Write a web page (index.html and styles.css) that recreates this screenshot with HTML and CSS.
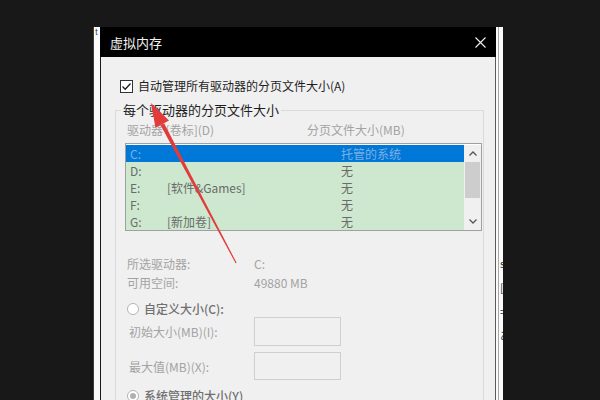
FILE: index.html
```html
<!DOCTYPE html>
<html lang="zh-CN">
  <head>
    <meta charset="UTF-8" />
    <meta name="viewport" content="width=device-width, initial-scale=1.0" />
    <title>虚拟内存</title>
    <link rel="stylesheet" href="styles.css">
  </head>
  <body>
    <!-- window behind the dialog, only its edges show -->
    <div class="back-window">
      <div class="back-edge">t</div>
      <div class="back-side">
        <span>s</span>
        <span>[/</span>
        <span>=</span>
        <span>あ</span>
      </div>
    </div>

    <div class="dialog">
      <div class="titlebar">
        <span class="title">虚拟内存</span>
        <svg class="close" width="11" height="11" viewBox="0 0 11 11">
          <path d="M0.5 0.5 L10.5 10.5 M10.5 0.5 L0.5 10.5" stroke="#f2f2f2" stroke-width="1.1" fill="none" />
        </svg>
      </div>

      <div class="dialog-body">
        <label class="check-row">
          <span class="checkbox">
            <svg width="11" height="11" viewBox="0 0 11 11">
              <path d="M1.5 5.5 L4.2 8.2 L9.5 2.5" stroke="#1e1e1e" stroke-width="1.3" fill="none" />
            </svg>
          </span>
          自动管理所有驱动器的分页文件大小(A)
        </label>

        <fieldset class="group">
          <legend>每个驱动器的分页文件大小</legend>

          <div class="col-heads">
            <span class="col-drive">驱动器 [卷标](D)</span>
            <span>分页文件大小(MB)</span>
          </div>

          <div class="listbox">
            <ul class="rows">
              <li class="selected">
                <span class="c-drive">C:</span><span class="c-label"></span><span>托管的系统</span>
              </li>
              <li>
                <span class="c-drive">D:</span><span class="c-label"></span><span>无</span>
              </li>
              <li>
                <span class="c-drive">E:</span><span class="c-label">[软件&amp;Games]</span><span>无</span>
              </li>
              <li>
                <span class="c-drive">F:</span><span class="c-label"></span><span>无</span>
              </li>
              <li>
                <span class="c-drive">G:</span><span class="c-label">[新加卷]</span><span>无</span>
              </li>
            </ul>
            <div class="scrollbar">
              <div class="sb-btn">
                <svg width="8" height="5" viewBox="0 0 8 5"><path d="M0.5 4.5 L4 1 L7.5 4.5" stroke="#555" stroke-width="1.3" fill="none" /></svg>
              </div>
              <div class="sb-thumb"></div>
              <div class="sb-track"></div>
              <div class="sb-btn">
                <svg width="8" height="5" viewBox="0 0 8 5"><path d="M0.5 0.5 L4 4 L7.5 0.5" stroke="#555" stroke-width="1.3" fill="none" /></svg>
              </div>
            </div>
          </div>

          <div class="info">
            <div class="info-row"><span class="info-key">所选驱动器:</span><span>C:</span></div>
            <div class="info-row"><span class="info-key">可用空间:</span><span>49880 MB</span></div>
          </div>

          <div class="radio-row">
            <span class="radio"></span>
            自定义大小(C):
          </div>
          <div class="field-row">
            <span class="field-label">初始大小(MB)(I):</span>
            <span class="textbox"></span>
          </div>
          <div class="field-row second">
            <span class="field-label">最大值(MB)(X):</span>
            <span class="textbox"></span>
          </div>
          <div class="radio-row last">
            <span class="radio checked"></span>
            系统管理的大小(Y)
          </div>
        </fieldset>
      </div>
    </div>

    <!-- red annotation arrow drawn over the dialog -->
    <svg class="arrow" width="600" height="400" viewBox="0 0 600 400">
      <polygon points="151,103 169,120.5 155.5,127.8" fill="#e23b3b" />
      <polygon points="164.1,123.3 160.5,125.1 235.6,263.2 236.6,262.8" fill="#e23b3b" />
    </svg>
  </body>
</html>
```

FILE: styles.css
```css
* {
  box-sizing: border-box;
}

body {
  margin: 0;
  width: 600px;
  height: 400px;
  overflow: hidden;
  position: relative;
  background: #181818;
  font-family: "Noto Sans CJK SC", "Noto Sans", sans-serif;
  font-size: 12px;
  color: #1e1e1e;
}

/* window underneath */
.back-window {
  position: absolute;
  left: 93px;
  top: 27px;
  width: 410px;
  height: 380px;
  background: #fbfbfb;
  border-left: 1px solid #3a3a3a;
  display: flex;
  justify-content: space-between;
}

.back-edge {
  font-size: 8px;
  line-height: 10px;
  padding: 0 0 0 1px;
  color: #333;
}

.back-side {
  width: 5px;
  border-left: 1px solid #a8a8a8;
  overflow: hidden;
  padding-top: 228px;
  font-size: 11px;
  color: #333;
}

.back-side span {
  display: block;
  height: 24px;
  line-height: 16px;
  white-space: nowrap;
  padding-left: 1px;
}

/* dialog */
.dialog {
  position: absolute;
  left: 100px;
  top: 27px;
  width: 396px;
  height: 380px;
  display: flex;
  flex-direction: column;
}

.titlebar {
  flex: none;
  height: 30px;
  background: #000;
  color: #f2f2f2;
  font-size: 13px;
  display: flex;
  align-items: center;
  justify-content: space-between;
  padding: 0 10px;
}

.dialog-body {
  flex: 1;
  background: #f0f0f0;
  border-left: 1px solid #1a1a1a;
  border-right: 1px solid #5a5a5a;
  padding: 21px 0 0 14px;
}

.check-row {
  display: flex;
  align-items: center;
  gap: 5px;
  margin-left: 5px;
  line-height: 16px;
}

.checkbox {
  width: 13px;
  height: 13px;
  border: 1px solid #333;
  background: #fff;
  display: flex;
  align-items: center;
  justify-content: center;
}

.group {
  margin: 8px 0 0 0;
  width: 369px;
  min-width: 0;
  border: 1px solid #dadada;
  padding: 4px 0 0 9px;
}

.group legend {
  font-size: 13px;
  line-height: 16px;
  padding: 0 2px;
  margin-left: -4px;
  color: #1e1e1e;
}

.col-heads {
  display: flex;
  padding-left: 2px;
  line-height: 16px;
  color: #a3a3a3;
  margin-bottom: 5px;
}

.col-drive {
  width: 180px;
}

/* list of drives */
.listbox {
  width: 357px;
  height: 88px;
  border: 1px solid #a0a0a0;
  padding-top: 1px;
  display: flex;
  background: #fff;
}

.rows {
  flex: 1;
  margin: 0;
  padding: 0;
  list-style: none;
  background: #cde8cf;
  align-self: flex-start;
}

.rows li {
  display: flex;
  height: 17px;
  line-height: 17px;
  padding-left: 4px;
  color: #6a6a6a;
  white-space: nowrap;
}

.rows li.selected {
  background: #0078d7;
  color: #7fb0e4;
}

.c-drive {
  width: 37px;
}

.c-label {
  width: 174px;
}

.scrollbar {
  width: 17px;
  height: 85px;
  background: #f0f0f0;
  display: flex;
  flex-direction: column;
}

.sb-btn {
  height: 17px;
  display: flex;
  align-items: center;
  justify-content: center;
}

.sb-thumb {
  height: 36px;
  margin: 0 1px;
  background: #cdcdcd;
}

.sb-track {
  flex: 1;
}

.info {
  margin-top: 23px;
  padding-left: 2px;
  color: #a3a3a3;
  line-height: 19px;
}

.info-row {
  display: flex;
}

.info-key {
  width: 127px;
}

.radio-row {
  margin-top: 9px;
  display: flex;
  align-items: center;
  gap: 5px;
  padding-left: 2px;
  line-height: 16px;
  color: #707070;
  font-weight: 500;
}

.radio-row.last {
  margin-top: 8px;
}

.radio {
  width: 12px;
  height: 12px;
  border: 1px solid #b4b4b4;
  border-radius: 50%;
  background: #fff;
  display: flex;
  align-items: center;
  justify-content: center;
}

.radio.checked::after {
  content: "";
  width: 6px;
  height: 6px;
  border-radius: 50%;
  background: #b0b0b0;
}

.field-row {
  display: flex;
  align-items: center;
  padding-left: 4px;
  color: #a3a3a3;
}

.field-row.second {
  margin-top: 6px;
}

.field-label {
  width: 125px;
}

.textbox {
  width: 87px;
  height: 29px;
  border: 1px solid #cfcfcf;
  background: #f0f0f0;
}

.field-row.second .textbox {
  height: 28px;
}

.arrow {
  position: absolute;
  left: 0;
  top: 0;
  pointer-events: none;
}
```
